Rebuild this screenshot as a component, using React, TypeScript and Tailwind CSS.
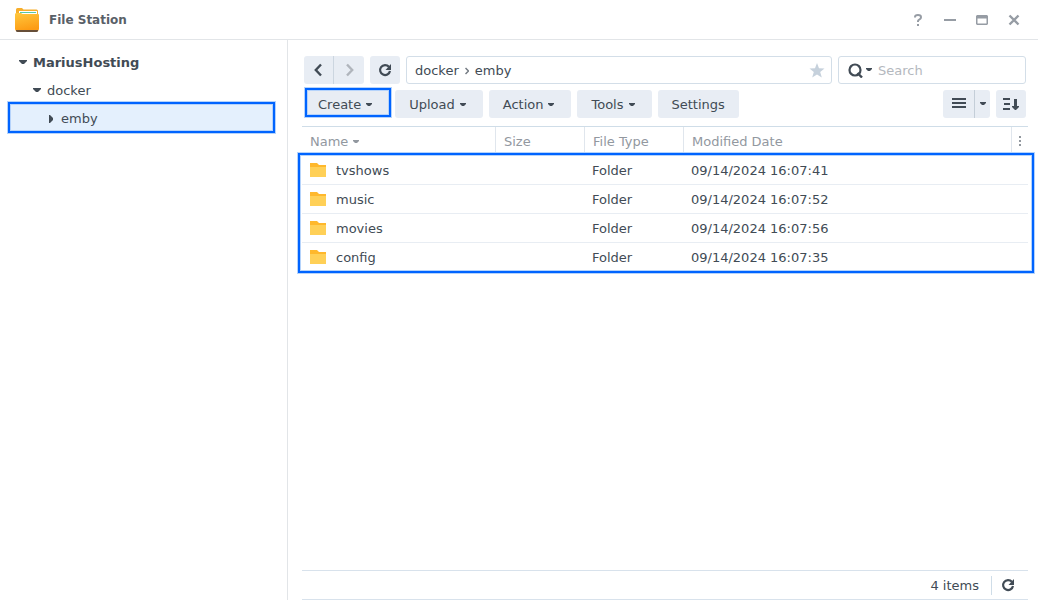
import React from "react";

const files = [
  { name: "tvshows", type: "Folder", modified: "09/14/2024 16:07:41" },
  { name: "music", type: "Folder", modified: "09/14/2024 16:07:52" },
  { name: "movies", type: "Folder", modified: "09/14/2024 16:07:56" },
  { name: "config", type: "Folder", modified: "09/14/2024 16:07:35" },
];

function Caret() {
  return (
    <svg width="6" height="5" viewBox="0 0 6 5" className="shrink-0" aria-hidden="true">
      <path d="M0 0h6v1L4 3H2L0 1z" fill="currentColor" />
    </svg>
  );
}

function TreeCaret() {
  return (
    <svg width="8" height="6" viewBox="0 0 8 6" className="shrink-0" aria-hidden="true">
      <path d="M0 0h8v1L5 4H3L0 1z" fill="currentColor" />
    </svg>
  );
}

function Refresh() {
  return (
    <svg width="14" height="14" viewBox="0 0 14 14" fill="none" aria-hidden="true">
      <path d="M10.900 3.800A5 5 0 1 0 12 8" stroke="currentColor" strokeWidth="2.200" />
      <path d="M13 1v6H7.500z" fill="currentColor" />
    </svg>
  );
}

function AppIcon() {
  return (
    <svg width="24" height="26" viewBox="0 0 24 26" aria-hidden="true">
      <defs>
        <linearGradient id="front" x1="0" y1="0" x2="0.3" y2="1">
          <stop offset="0" stopColor="#ffc83e" />
          <stop offset="1" stopColor="#fd9c14" />
        </linearGradient>
      </defs>
      <path d="M1 8V2.500Q1 1 2.500 1H7l1.500 1.500H21.500Q23 2.500 23 4V8H1z" fill="#f7ae2b" />
      <path d="M4 4h18v4H4z" fill="#fff" />
      <path d="M5 5h16v1H5z" fill="#59c9a5" />
      <path d="M0 7.500Q0 6 1 6h5l1.500 1h15.500q1 0 1 1V22q0 2-2 2H2q-2 0-2-2z" fill="url(#front)" />
      <path d="M1 23h22v1q0 1-1.500 1h-19Q1 25 1 24z" fill="#664e38" />
    </svg>
  );
}

function FolderIcon() {
  return (
    <svg width="16" height="14" viewBox="0 0 16 14" className="shrink-0" aria-hidden="true">
      <path d="M0 0h7l2 2h7v4H0z" fill="#ffb82c" />
      <path d="M0 4h16v10H0z" fill="#ffd057" />
    </svg>
  );
}

function Highlight({ className }: { className: string }) {
  return (
    <span
      aria-hidden="true"
      className={`pointer-events-none absolute border-2 border-[#0064ff] shadow-[0_0_0_1px_#b5d3fb,inset_0_0_0_1px_#b5d3fb] ${className}`}
    />
  );
}

const buttonFill = "flex items-center justify-center bg-[#e8edf4]";

function MenuButton({ label, menu = true }: { label: string; menu?: boolean }) {
  return (
    <button type="button" className={`${buttonFill} h-7 gap-[5px] rounded-[3px] pt-0.5 pl-3.5 ${menu ? "pr-[17px]" : "pr-3.5"}`}>
      {label}
      {menu && <Caret />}
    </button>
  );
}

function TitleBar() {
  return (
    <header className="flex h-10 items-center justify-between border-b border-[#e2e5e8] pl-[15px] pr-[18px] text-[#596068]">
      <div className="flex items-center gap-2.5">
        <AppIcon />
        <h1 className="text-xs font-bold">File Station</h1>
      </div>
      <div className="flex gap-5 text-[#969ca4]">
        <button type="button" aria-label="Help" className="h-3">
          <svg width="12" height="12" viewBox="0 0 12 12" fill="none">
            <path d="M3 3.500V3q0-2 3-2t3 2.200q0 1.300-1.500 2.100Q6 6 6 7v1" stroke="currentColor" strokeWidth="2" />
            <path d="M5 10h2v2H5z" fill="currentColor" />
          </svg>
        </button>
        <button type="button" aria-label="Minimize" className="h-3">
          <svg width="12" height="12" viewBox="0 0 12 12"><path d="M0 5h12v2H0z" fill="currentColor" /></svg>
        </button>
        <button type="button" aria-label="Maximize" className="h-3">
          <svg width="12" height="12" viewBox="0 0 12 12">
            <path d="M1 1h10l1 1v8l-1 1H1l-1-1V2zM1.500 4.500v5h9v-5z" fill="currentColor" fillRule="evenodd" />
          </svg>
        </button>
        <button type="button" aria-label="Close" className="h-3">
          <svg width="12" height="12" viewBox="0 0 12 12"><path d="M1.500 1.500l9 9M10.500 1.500l-9 9" stroke="currentColor" strokeWidth="2.400" /></svg>
        </button>
      </div>
    </header>
  );
}

function Sidebar() {
  return (
    <nav aria-label="Folders" className="w-72 shrink-0 border-r border-[#e2e5e8] px-[9px] pt-2">
      <button type="button" className="flex h-7 w-full items-center gap-1.5 pt-0.5 pl-2.5 font-bold">
        <TreeCaret />
        MariusHosting
      </button>
      <button type="button" className="flex h-7 w-full items-center gap-1.5 pt-0.5 pl-6">
        <TreeCaret />
        docker
      </button>
      <div className="relative mr-1">
        <button type="button" className="flex h-7 w-full items-center gap-2 bg-[#e4f0fd] pt-0.5 pl-10">
          <svg width="4" height="8" viewBox="0 0 4 8" className="shrink-0" aria-hidden="true">
            <path d="M0 0h1l3 3v2L1 8H0z" fill="currentColor" />
          </svg>
          emby
        </button>
        <Highlight className="-inset-x-px -top-0.5 -bottom-px" />
      </div>
    </nav>
  );
}

function Toolbar() {
  return (
    <div className="flex flex-col gap-1.5 pl-0.5 pr-0.5">
      <div className="flex gap-1.5">
        <div className="flex">
          <button type="button" aria-label="Back" className={`${buttonFill} h-7 w-[30px] rounded-l-[3px] border-r border-[#ccd6e0]`}>
            <svg width="9" height="14" viewBox="0 0 9 14" fill="none"><path d="M7 1.500L1.800 7 7 12.500" stroke="currentColor" strokeWidth="2.400" /></svg>
          </button>
          <button type="button" aria-label="Forward" className={`${buttonFill} h-7 w-[30px] rounded-r-[3px] text-[#b0b5bc]`}>
            <svg width="9" height="14" viewBox="0 0 9 14" fill="none"><path d="M2 1.500L7.200 7 2 12.500" stroke="currentColor" strokeWidth="2.400" /></svg>
          </button>
        </div>
        <button type="button" aria-label="Refresh" className={`${buttonFill} h-7 w-[30px] rounded-[3px]`}>
          <Refresh />
        </button>
        <div className="flex h-7 grow items-center justify-between rounded-[3px] border border-[#d3dee8] pl-2 pr-1.5">
          <div className="flex items-center gap-1.5 pt-0.5">
            <a href="#docker">docker</a>
            <svg width="4" height="8" viewBox="0 0 4 8" fill="none" aria-hidden="true"><path d="M.5 1l3 3-3 3" stroke="#737a82" strokeWidth="1.500" /></svg>
            <a href="#emby">emby</a>
          </div>
          <button type="button" aria-label="Add to favorites" className="text-[#c6d1dc]">
            <svg width="16" height="15" viewBox="0 0 16 15"><path d="M8 0l2 5.300 5.500.2-4.300 3.500L12.800 14.500 8 11.400 3.200 14.500 4.800 9 .5 5.500 6 5.300z" fill="currentColor" /></svg>
          </button>
        </div>
        <div className="flex h-7 w-[188px] items-center rounded-[3px] border border-[#d3dee8] pl-[9px]">
          <button type="button" aria-label="Search options" className="flex items-center gap-[3px]">
            <svg width="15" height="15" viewBox="0 0 15 15" fill="none">
              <circle cx="7" cy="7" r="5.500" stroke="currentColor" strokeWidth="2.200" />
              <path d="M9.500 10l4.500 4.500" stroke="currentColor" strokeWidth="2.400" />
            </svg>
            <Caret />
          </button>
          <input type="text" aria-label="Search" placeholder="Search" className="ml-1.5 min-w-0 grow pt-0.5 outline-none placeholder:text-[#b4b8be]" />
        </div>
      </div>
      <div className="flex items-center justify-between">
        <div className="flex gap-1.5">
          <div className="relative">
            <MenuButton label="Create" />
            <Highlight className="-top-0.5 bottom-px left-px -right-0.5" />
          </div>
          <MenuButton label="Upload" />
          <MenuButton label="Action" />
          <MenuButton label="Tools" />
          <MenuButton label="Settings" menu={false} />
        </div>
        <div className="flex gap-1.5">
          <div className="flex">
            <button type="button" aria-label="List view" className={`${buttonFill} h-7 w-8 rounded-l-[3px] border-r border-[#c4ced8]`}>
              <svg width="14" height="12" viewBox="0 0 14 12"><path d="M0 0h14v2H0zM0 4h14v2H0zM0 8h14v2H0z" fill="currentColor" /></svg>
            </button>
            <button type="button" aria-label="View options" className={`${buttonFill} h-7 w-[15px] rounded-r-[3px]`}>
              <Caret />
            </button>
          </div>
          <button type="button" aria-label="Sort" className={`${buttonFill} h-7 w-[30px] rounded-[3px]`}>
            <svg width="16" height="14" viewBox="0 0 16 14">
              <path d="M0 1h7v2H0zM1 6h6v2H1zM0 11h7v2H0zM11 2h3v7h2v1l-3 3h-1L9 10V9h2z" fill="currentColor" />
            </svg>
          </button>
        </div>
      </div>
    </div>
  );
}

const headCell = "border-r border-[#e0e6ed] px-2 pt-px text-left font-normal";

function FileTable() {
  return (
    <div className="relative mt-2">
      <table className="w-full table-fixed border-separate border-spacing-0 border-t border-[#cfdde8]">
        <colgroup>
          <col className="w-[194px]" />
          <col className="w-[89px]" />
          <col className="w-[99px]" />
          <col />
          <col className="w-4" />
        </colgroup>
        <thead className="text-[#92989f]">
          <tr className="h-[29px]">
            <th className={headCell}>
              <button type="button" className="flex items-center gap-[5px]">
                Name
                <Caret />
              </button>
            </th>
            <th className={headCell}>Size</th>
            <th className={headCell}>File Type</th>
            <th className={headCell}>Modified Date</th>
            <th className="p-0">
              <button type="button" aria-label="Columns" className="flex w-full justify-center">
                <svg width="2" height="12" viewBox="0 0 2 12"><path d="M0 0h2v2H0zM0 4h2v2H0zM0 8h2v2H0z" fill="currentColor" /></svg>
              </button>
            </th>
          </tr>
        </thead>
        <tbody className="[&_td]:border-b [&_td]:border-[#e8edf3] [&_tr:last-child_td]:border-transparent">
          {files.map((file) => (
            <tr key={file.name} className="h-[29px]">
              <td className="px-2">
                <span className="flex items-center gap-2.5">
                  <FolderIcon />
                  <span className="pt-0.5">{file.name}</span>
                </span>
              </td>
              <td />
              <td className="px-[7px] pt-0.5">{file.type}</td>
              <td className="px-[7px] pt-0.5" colSpan={2}>{file.modified}</td>
            </tr>
          ))}
        </tbody>
      </table>
      <Highlight className="-left-1 -right-1.5 top-[27px] -bottom-px" />
    </div>
  );
}

export default function App() {
  return (
    <div className="flex min-h-screen flex-col bg-white font-['DejaVu_Sans',sans-serif] text-[13px] leading-5 text-[#414b55]">
      <TitleBar />
      <div className="flex grow">
        <Sidebar />
        <main className="flex min-w-0 grow flex-col pl-3.5 pr-2.5 pt-4">
          <Toolbar />
          <FileTable />
          <footer className="mt-auto flex h-[30px] items-center justify-end gap-3 border-y border-[#d8e2ec] pr-[13px]">
            <span className="pt-0.5">4 items</span>
            <div className="flex h-[19px] items-center border-l border-[#cfdde8] pl-[9px]">
              <button type="button" aria-label="Reload list">
                <Refresh />
              </button>
            </div>
          </footer>
        </main>
      </div>
    </div>
  );
}
